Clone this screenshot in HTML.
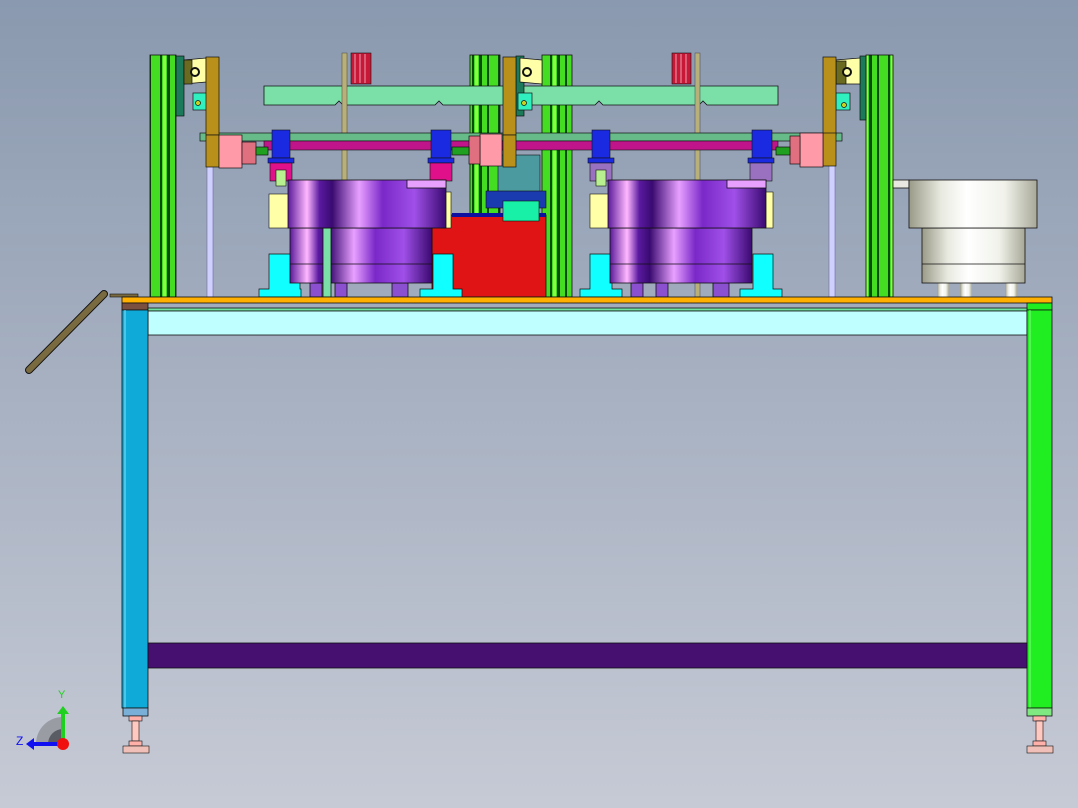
<!DOCTYPE html>
<html><head><meta charset="utf-8"><style>
html,body{margin:0;padding:0;}
body{width:1078px;height:808px;overflow:hidden;font-family:"Liberation Sans",sans-serif;background:#c6cad5;}
svg{display:block;}
</style></head><body>
<svg width="1078" height="808" viewBox="0 0 1078 808" xmlns="http://www.w3.org/2000/svg">
<defs>
<linearGradient id="bg" x1="0" y1="0" x2="0" y2="1">
<stop offset="0" stop-color="#8a99af"/><stop offset="1" stop-color="#c6cad5"/>
</linearGradient>
<linearGradient id="pur" x1="0" y1="0" x2="1" y2="0">
<stop offset="0" stop-color="#5a1a9a"/><stop offset="0.12" stop-color="#ffb8ff"/><stop offset="0.2" stop-color="#5a1aa0"/><stop offset="0.28" stop-color="#3a0a70"/><stop offset="0.45" stop-color="#e8a0ff"/><stop offset="0.6" stop-color="#7a28c8"/><stop offset="0.8" stop-color="#a050e8"/><stop offset="1" stop-color="#3a0a70"/>
</linearGradient>
<linearGradient id="sil" x1="0" y1="0" x2="1" y2="0">
<stop offset="0" stop-color="#9a9a88"/><stop offset="0.25" stop-color="#e8eae0"/><stop offset="0.45" stop-color="#ffffff"/><stop offset="0.75" stop-color="#f0f2ea"/><stop offset="1" stop-color="#a8a898"/>
</linearGradient>
<pattern id="post" width="26" height="10" patternUnits="userSpaceOnUse">
<rect width="26" height="10" fill="#44dd22"/>
<rect x="4" width="2" height="10" fill="#0a4a0a"/><rect x="11" width="3" height="10" fill="#0a4a0a"/><rect x="19" width="2" height="10" fill="#0a4a0a"/>
<rect x="7" width="3" height="10" fill="#88ff44"/>
</pattern>
</defs>
<rect width="1078" height="808" fill="url(#bg)"/>

<line x1="29" y1="370" x2="104" y2="294" stroke="#111" stroke-width="8" stroke-linecap="round"/>
<line x1="29" y1="370" x2="104" y2="294" stroke="#7a6a40" stroke-width="6" stroke-linecap="round"/>
<rect x="110" y="294" width="28" height="3" fill="#7a6a40" stroke="#111" stroke-width="0.6"/>

<rect x="207" y="141" width="6" height="156" fill="#d0d0ff" stroke="#6a6aa0" stroke-width="0.6"/>
<rect x="829" y="141" width="6" height="156" fill="#d0d0ff" stroke="#6a6aa0" stroke-width="0.6"/>

<rect x="150" y="55" width="26" height="242" fill="url(#post)" stroke="#111" stroke-width="0.8"/>
<rect x="470" y="55" width="30" height="242" fill="url(#post)" stroke="#111" stroke-width="0.8"/>
<rect x="542" y="55" width="30" height="242" fill="url(#post)" stroke="#111" stroke-width="0.8"/>
<rect x="866" y="55" width="27" height="242" fill="url(#post)" stroke="#111" stroke-width="0.8"/>

<rect x="432" y="215" width="114" height="82" fill="#e01414" stroke="#111" stroke-width="0.8"/>
<rect x="452" y="213" width="94" height="4" fill="#1010a0"/>
<rect x="498" y="155" width="42" height="38" fill="#4a9aa0" stroke="#111" stroke-width="0.6"/>
<rect x="486" y="191" width="60" height="17" fill="#1a3ab0" stroke="#111" stroke-width="0.6"/>
<rect x="503" y="201" width="36" height="20" fill="#18f0a8" stroke="#111" stroke-width="0.6"/>

<path d="M264 86 H778 V105 H707 l-4 -4 l-4 4 H603 l-4 -4 l-4 4 H443 l-4 -4 l-4 4 H343 l-4 -4 l-4 4 H264 Z" fill="#7ae0a8" stroke="#111" stroke-width="0.8"/>
<rect x="342" y="53" width="5" height="244" fill="#b8b078" stroke="#444" stroke-width="0.5"/>
<rect x="695" y="53" width="5" height="244" fill="#b8b078" stroke="#444" stroke-width="0.5"/>
<rect x="351" y="53" width="20" height="31" fill="#c81838" stroke="#111" stroke-width="0.6"/>
<rect x="672" y="53" width="19" height="31" fill="#c81838" stroke="#111" stroke-width="0.6"/>
<g stroke="#fff" stroke-width="0.6"><line x1="355" y1="54" x2="355" y2="83"/><line x1="360" y1="54" x2="360" y2="83"/><line x1="365" y1="54" x2="365" y2="83"/><line x1="676" y1="54" x2="676" y2="83"/><line x1="681" y1="54" x2="681" y2="83"/><line x1="686" y1="54" x2="686" y2="83"/></g>

<rect x="200" y="133" width="642" height="8" fill="#66bb88" stroke="#111" stroke-width="0.7"/>
<rect x="264" y="141" width="514" height="9" fill="#c0158a" stroke="#111" stroke-width="0.6"/>

<g stroke="#111" stroke-width="0.7">
<rect x="176" y="56" width="8" height="60" fill="#1a7a5a"/>
<path d="M184 60 L206 58 V82 L184 84 Z" fill="#ffffa8"/>
<rect x="184" y="60" width="8" height="24" fill="#6a6a20"/>
<circle cx="195" cy="72" r="4" fill="#ffffa8" stroke-width="2"/>
<rect x="193" y="93" width="14" height="17" fill="#30f0c0"/>
<circle cx="198" cy="103" r="2.5" fill="#c8d020"/>
<rect x="206" y="57" width="13" height="78" fill="#b8901a"/>
<rect x="206" y="135" width="13" height="32" fill="#b8901a"/>

<rect x="516" y="56" width="8" height="60" fill="#1a7a5a"/>
<path d="M542 60 L520 58 V82 L542 84 Z" fill="#ffffa8"/>
<circle cx="527" cy="72" r="4" fill="#ffffa8" stroke-width="2"/>
<rect x="518" y="93" width="14" height="17" fill="#30f0c0"/>
<circle cx="524" cy="103" r="2.5" fill="#c8d020"/>
<rect x="503" y="57" width="13" height="78" fill="#b8901a"/>
<rect x="503" y="135" width="13" height="32" fill="#b8901a"/>

<rect x="860" y="56" width="6" height="64" fill="#1a7a5a"/>
<path d="M836 60 L860 58 V84 L836 84 Z" fill="#ffffa8"/>
<rect x="836" y="61" width="10" height="23" fill="#6a6a20"/>
<circle cx="847" cy="72" r="4" fill="#ffffa8" stroke-width="2"/>
<rect x="836" y="93" width="14" height="17" fill="#30f0c0"/>
<circle cx="844" cy="105" r="2.5" fill="#c8d020"/>
<rect x="823" y="57" width="13" height="78" fill="#b8901a"/>
<rect x="823" y="133" width="13" height="33" fill="#b8901a"/>
</g>

<g stroke="#111" stroke-width="0.7">
<rect x="219" y="135" width="23" height="33" fill="#ff9aa8"/>
<rect x="242" y="142" width="14" height="22" fill="#e07080"/>
<rect x="256" y="147" width="12" height="8" fill="#20a020"/>
<rect x="480" y="134" width="22" height="32" fill="#ff9aa8"/>
<rect x="469" y="136" width="11" height="28" fill="#e07080"/>
<rect x="452" y="147" width="17" height="8" fill="#20a020"/>
<rect x="800" y="133" width="23" height="34" fill="#ff9aa8"/>
<rect x="790" y="136" width="10" height="28" fill="#e07080"/>
<rect x="776" y="147" width="14" height="8" fill="#20a020"/>
</g>

<g stroke="#111" stroke-width="0.6">
<rect x="272" y="130" width="18" height="28" fill="#1a2ae0"/>
<rect x="268" y="158" width="26" height="5" fill="#1a2ae0"/>
<rect x="270" y="163" width="22" height="18" fill="#e0108a"/>
<rect x="276" y="170" width="10" height="16" fill="#b8f090"/>
<rect x="269" y="194" width="22" height="34" fill="#ffffa8"/>
<rect x="431" y="130" width="20" height="28" fill="#1a2ae0"/>
<rect x="428" y="158" width="26" height="5" fill="#1a2ae0"/>
<rect x="430" y="163" width="22" height="18" fill="#e0108a"/>
<rect x="441" y="192" width="10" height="36" fill="#ffffa8"/>
<rect x="592" y="130" width="18" height="28" fill="#1a2ae0"/>
<rect x="588" y="158" width="26" height="5" fill="#1a2ae0"/>
<rect x="590" y="163" width="22" height="18" fill="#9a70c0"/>
<rect x="596" y="170" width="10" height="16" fill="#b8f090"/>
<rect x="590" y="194" width="22" height="34" fill="#ffffa8"/>
<rect x="752" y="130" width="20" height="28" fill="#1a2ae0"/>
<rect x="748" y="158" width="26" height="5" fill="#1a2ae0"/>
<rect x="750" y="163" width="22" height="18" fill="#9a70c0"/>
<rect x="765" y="192" width="8" height="36" fill="#ffffa8"/>
</g>

<g fill="#10ffff" stroke="#111" stroke-width="0.7">
<path d="M269 254 H300 V289 H301 V297 H259 V289 H269 Z"/>
<path d="M433 254 H453 V289 H462 V297 H420 V289 H433 Z"/>
<path d="M590 254 H612 V289 H622 V297 H580 V289 H590 Z"/>
<path d="M753 254 H773 V289 H782 V297 H740 V289 H753 Z"/>
</g>

<g stroke="#111" stroke-width="0.8">
<rect x="310" y="283" width="12" height="14" fill="#8a50d0"/><rect x="335" y="283" width="12" height="14" fill="#8a50d0"/><rect x="392" y="283" width="16" height="14" fill="#8a50d0"/>
<rect x="290" y="228" width="142" height="55" fill="url(#pur)"/>
<line x1="290" y1="264" x2="432" y2="264"/>
<rect x="323" y="228" width="8" height="69" fill="#7ae0a8"/>
<rect x="288" y="180" width="158" height="48" fill="url(#pur)"/>
<rect x="407" y="180" width="39" height="8" fill="#e8a0ff"/>

<rect x="631" y="283" width="12" height="14" fill="#8a50d0"/><rect x="656" y="283" width="12" height="14" fill="#8a50d0"/><rect x="713" y="283" width="16" height="14" fill="#8a50d0"/>
<rect x="610" y="228" width="142" height="55" fill="url(#pur)"/>
<line x1="610" y1="264" x2="752" y2="264"/>
<rect x="608" y="180" width="158" height="48" fill="url(#pur)"/>
<rect x="727" y="180" width="39" height="8" fill="#e8a0ff"/>
</g>

<g stroke="#111" stroke-width="0.8">
<rect x="893" y="180" width="16" height="8" fill="#e8e8e0"/>
<rect x="937" y="283" width="12" height="14" fill="url(#sil)" stroke="none"/><rect x="960" y="283" width="12" height="14" fill="url(#sil)" stroke="none"/><rect x="1005" y="283" width="12" height="14" fill="url(#sil)" stroke="none"/>
<rect x="922" y="228" width="103" height="55" fill="url(#sil)"/>
<line x1="922" y1="264" x2="1025" y2="264"/>
<rect x="909" y="180" width="128" height="48" fill="url(#sil)"/>
</g>

<g stroke="#111" stroke-width="0.8">
<rect x="122" y="297" width="930" height="6" fill="#ffb000"/>
<rect x="122" y="303" width="26" height="7" fill="#7a5040"/>
<rect x="1027" y="303" width="25" height="7" fill="#20ee20"/>
<rect x="148" y="308" width="879" height="3" fill="#70e0a0"/>
<rect x="148" y="311" width="879" height="24" fill="#c0ffff"/>
<rect x="122" y="310" width="26" height="398" fill="#10aad8"/>
<line x1="125" y1="310" x2="125" y2="708" stroke="#a0f0ff"/>
<rect x="1027" y="310" width="25" height="398" fill="#20ee20"/>
<line x1="1030" y1="310" x2="1030" y2="708" stroke="#a0ffa0"/>
<rect x="148" y="643" width="879" height="25" fill="#461070"/>
<rect x="123" y="708" width="25" height="8" fill="#7ab0d8"/>
<rect x="1027" y="708" width="25" height="8" fill="#80e880"/>
</g>
<g stroke="#111" stroke-width="0.6">
<rect x="129" y="716" width="13" height="5" fill="#ffb0a8"/>
<rect x="132" y="721" width="7" height="20" fill="#ffc8c0"/>
<rect x="129" y="741" width="13" height="5" fill="#ffb0a8"/>
<rect x="123" y="746" width="26" height="7" fill="#f0c0b8"/>
<rect x="1033" y="716" width="13" height="5" fill="#ffb0a8"/>
<rect x="1036" y="721" width="7" height="20" fill="#ffc8c0"/>
<rect x="1033" y="741" width="13" height="5" fill="#ffb0a8"/>
<rect x="1027" y="746" width="26" height="7" fill="#f0c0b8"/>
</g>

<path d="M36 744 A27 27 0 0 1 63 717 L63 744 Z" fill="#9a9ca4"/>
<path d="M48 744 A15 15 0 0 1 63 729 L63 744 Z" fill="#5a5c64"/>
<rect x="61" y="714" width="4" height="30" fill="#20d020"/>
<path d="M57 714 L63 706 L69 714 Z" fill="#20d020"/>
<rect x="34" y="742" width="29" height="4" fill="#1010f0"/>
<path d="M34 738 L26 744 L34 750 Z" fill="#1010f0"/>
<circle cx="63" cy="744" r="6" fill="#f01010"/>
<text x="58" y="698" font-size="11" fill="#20d020" font-family="Liberation Sans,sans-serif">Y</text>
<text x="16" y="745" font-size="12" fill="#1010f0" font-family="Liberation Sans,sans-serif">Z</text>
</svg>
</body></html>
